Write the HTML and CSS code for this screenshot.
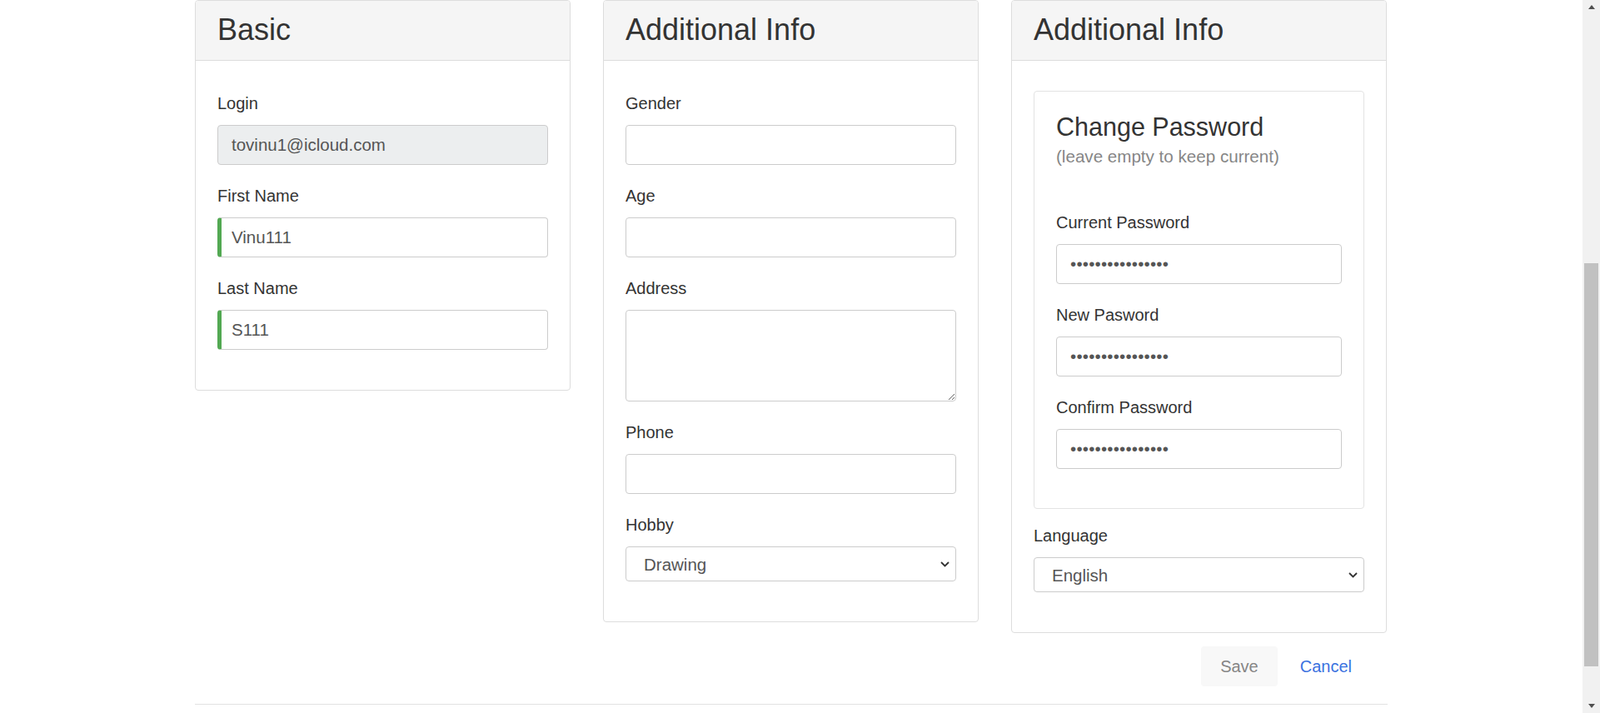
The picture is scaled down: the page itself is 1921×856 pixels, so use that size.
FILE: index.html
```html
<!DOCTYPE html>
<html lang="en">
<head>
<meta charset="utf-8">
<title>Profile</title>
<link rel="stylesheet" href="styles.css">
</head>
<body>
<div class="page">
  <div class="container">
    <div class="cards">
      <section class="card">
        <header class="card-head"><h2>Basic</h2></header>
        <div class="card-body">
          <div class="group">
            <label class="lbl">Login</label>
            <input class="ctl" type="text" value="tovinu1@icloud.com" disabled>
          </div>
          <div class="group">
            <label class="lbl">First Name</label>
            <input class="ctl valid" type="text" value="Vinu111">
          </div>
          <div class="group">
            <label class="lbl">Last Name</label>
            <input class="ctl valid" type="text" value="S111">
          </div>
        </div>
      </section>

      <section class="card">
        <header class="card-head"><h2>Additional Info</h2></header>
        <div class="card-body">
          <div class="group">
            <label class="lbl">Gender</label>
            <input class="ctl" type="text" value="">
          </div>
          <div class="group">
            <label class="lbl">Age</label>
            <input class="ctl" type="text" value="">
          </div>
          <div class="group">
            <label class="lbl">Address</label>
            <textarea class="ctl area"></textarea>
          </div>
          <div class="group">
            <label class="lbl">Phone</label>
            <input class="ctl" type="text" value="">
          </div>
          <div class="group">
            <label class="lbl">Hobby</label>
            <div class="sel-wrap">
              <select class="ctl sel"><option>Drawing</option></select>
              <svg class="chev" width="11" height="7" viewBox="0 0 11 7"><polyline points="1,1 5.5,5.5 10,1" fill="none" stroke="#333" stroke-width="1.8"/></svg>
            </div>
          </div>
        </div>
      </section>

      <section class="card">
        <header class="card-head"><h2>Additional Info</h2></header>
        <div class="card-body">
          <div class="pw-box">
            <div class="pw-title">
              <h3>Change Password</h3>
              <small>(leave empty to keep current)</small>
            </div>
            <div class="group">
              <label class="lbl">Current Password</label>
              <input class="ctl pw" type="password" value="aaaaaaaaaaaaaaaa">
            </div>
            <div class="group">
              <label class="lbl">New Pasword</label>
              <input class="ctl pw" type="password" value="aaaaaaaaaaaaaaaa">
            </div>
            <div class="group">
              <label class="lbl">Confirm Password</label>
              <input class="ctl pw" type="password" value="aaaaaaaaaaaaaaaa">
            </div>
          </div>
          <div class="group">
            <label class="lbl">Language</label>
            <div class="sel-wrap">
              <select class="ctl sel sel-lang"><option>English</option></select>
              <svg class="chev" width="11" height="7" viewBox="0 0 11 7"><polyline points="1,1 5.5,5.5 10,1" fill="none" stroke="#333" stroke-width="1.8"/></svg>
            </div>
          </div>
        </div>
      </section>
    </div>

    <div class="actions">
      <button class="btn btn-save" type="button">Save</button>
      <button class="btn btn-cancel" type="button">Cancel</button>
    </div>
    <div class="rule"></div>
  </div>
</div>
<div class="scrollbar">
  <div class="sb-btn"><span class="tri-up"></span></div>
  <div class="sb-track"><div class="sb-thumb"></div></div>
  <div class="sb-btn"><span class="tri-down"></span></div>
</div>
</body>
</html>
```

FILE: styles.css
```css
html, body {
  height: 100%;
}
body {
  margin: 0;
  display: flex;
  overflow: hidden;
  background: #fff;
  color: #333;
  font-family: "Liberation Sans", Arial, sans-serif;
  font-size: 20px;
}
.page {
  flex: 1;
  overflow: hidden;
}
.container {
  width: 1432px;
  margin: 0 auto;
}
.cards {
  display: grid;
  grid-template-columns: 451px 451px 451px;
  column-gap: 39px;
  align-items: start;
}
.card {
  border: 1px solid #ddd;
  border-radius: 4px;
  background: #fff;
}
.card-head {
  background: #f5f5f5;
  border-bottom: 1px solid #ddd;
  border-radius: 3px 3px 0 0;
  padding: 15px 26px 16px;
}
.card-head h2 {
  margin: 0;
  font-size: 36px;
  line-height: 40px;
  font-weight: normal;
  color: #333;
}
.card-body {
  padding: 37px 26px 25px;
}
.group {
  margin-bottom: 23px;
}
.lbl {
  display: block;
  font-size: 20px;
  line-height: 28px;
  margin-bottom: 12px;
  color: #333;
}
.ctl {
  display: block;
  box-sizing: border-box;
  width: 100%;
  height: 48px;
  margin: 0;
  padding: 0 16px;
  border: 1px solid #ccc;
  border-radius: 4px;
  background: #fff;
  color: #555;
  font-family: "Liberation Sans", Arial, sans-serif;
  font-size: 20.5px;
  outline: none;
}
.ctl:disabled {
  background: #eceeef;
  color: #555;
}
.valid {
  border-left: 5px solid #52a852;
  padding-left: 12px;
}
.area {
  height: 110px;
  padding: 10px 16px;
  resize: vertical;
}
.sel-wrap {
  position: relative;
}
.sel {
  height: 42px;
  padding: 0 21px;
  appearance: none;
  -webkit-appearance: none;
}
.chev {
  position: absolute;
  right: 8px;
  top: 18px;
}
.pw-box {
  margin-top: -1px;
  margin-bottom: 18px;
  border: 1px solid #e3e3e3;
  border-radius: 4px;
  padding: 26px 26px 24px;
}
.pw-title {
  margin-bottom: 51px;
}
.pw-title h3 {
  margin: 0;
  font-size: 30.5px;
  line-height: 33px;
  font-weight: normal;
  color: #333;
}
.pw-title small {
  display: block;
  margin-top: 5px;
  font-size: 20.6px;
  line-height: 28px;
  color: #868686;
}
.pw {
  letter-spacing: 0.2px;
}
.actions {
  display: flex;
  justify-content: flex-end;
  gap: 4px;
  margin-top: 16px;
  padding-right: 20px;
}
.btn {
  height: 48px;
  padding: 0 23px;
  border: none;
  border-radius: 4px;
  font-family: "Liberation Sans", Arial, sans-serif;
  font-size: 20px;
  background: transparent;
}
.btn-save {
  background: #f8f8f8;
  color: #858585;
}
.btn-cancel {
  color: #3b72e0;
}
.rule {
  margin-top: 21px;
  border-top: 1px solid #e2e2e2;
}
.scrollbar {
  width: 21px;
  flex: none;
  background: #f1f1f1;
  display: flex;
  flex-direction: column;
  align-items: center;
}
.sb-btn {
  height: 17px;
  width: 21px;
  display: flex;
  align-items: center;
  justify-content: center;
}
.tri-up {
  width: 0;
  height: 0;
  border-left: 4.5px solid transparent;
  border-right: 4.5px solid transparent;
  border-bottom: 5px solid #505050;
}
.tri-down {
  width: 0;
  height: 0;
  border-left: 4.5px solid transparent;
  border-right: 4.5px solid transparent;
  border-top: 5px solid #505050;
}
.sb-track {
  flex: 1;
  padding-top: 299px;
}
.sb-thumb {
  width: 17px;
  height: 484px;
  background: #c1c1c1;
}
```
